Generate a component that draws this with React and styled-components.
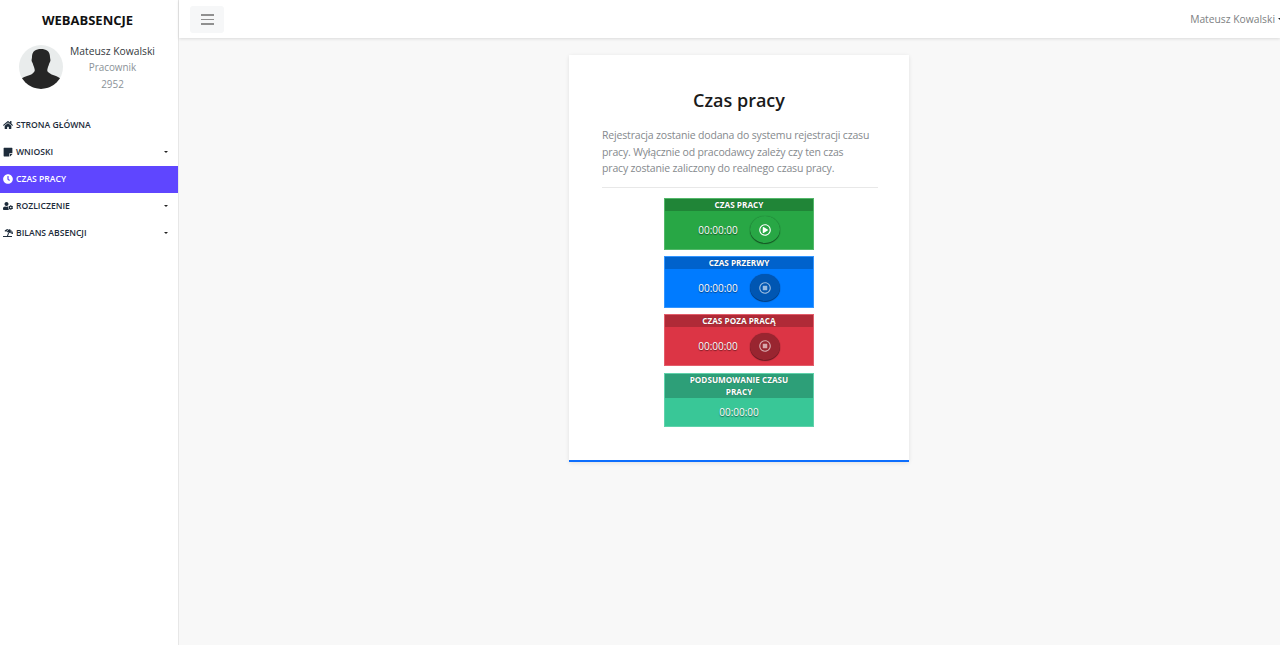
import React from 'react';
import styled, { createGlobalStyle } from 'styled-components';
import { FaHome, FaStickyNote, FaClock, FaUserCog, FaUmbrellaBeach, FaRegPlayCircle, FaRegStopCircle } from 'react-icons/fa';

const Global = createGlobalStyle`
  html, body { margin: 0; padding: 0; height: 100%; }
  body { background: #f8f8f8; font-family: "Open Sans", "Noto Sans", sans-serif; }
  * { box-sizing: border-box; }
`;

const Page = styled.div`
  display: flex;
  height: 645px;
  overflow: hidden;
`;

const Sidebar = styled.aside`
  width: 179px;
  flex: none;
  background: #fff;
  border-right: 1px solid #e7e7e7;
`;

const Brand = styled.div`
  height: 40px;
  display: flex;
  align-items: center;
  justify-content: center;
  padding-right: 3px;
  font-size: 13px;
  font-weight: 700;
  color: #111;
`;

const Profile = styled.div`
  display: flex;
  height: 72px;
  padding: 5px 0 0 19px;
`;

const Avatar = styled.div`
  width: 44px;
  height: 44px;
  flex: none;
  border-radius: 50%;
  background: #e9ecec;
  overflow: hidden;
`;

const ProfileText = styled.div`
  width: 85px;
  flex: none;
  margin: -2.5px 0 0 7px;
  text-align: center;
  white-space: nowrap;
  font-size: 9.9px;
  line-height: 16.5px;
  color: #8b9298;
`;

const ProfileName = styled.div`
  color: #343a40;
  font-size: 10.3px;
`;

const Nav = styled.nav`
  display: flex;
  flex-direction: column;
`;

const NavItem = styled.div`
  height: 27px;
  display: flex;
  align-items: center;
  padding: 0 10px 1px 3px;
  font-size: 8.6px;
  font-weight: 600;
  color: ${p => (p.$active ? '#fff' : '#1d2b3a')};
  background: ${p => (p.$active ? '#5f46ff' : 'transparent')};
`;

const NavIcon = styled.span`
  width: 13px;
  flex: none;
  display: flex;
  svg { height: 10px; width: auto; }
`;

const NavLabel = styled.span`
  flex: 1;
`;

const Caret = styled.span`
  width: 0;
  height: 0;
  border-left: 2px solid transparent;
  border-right: 2px solid transparent;
  border-top: 2px solid #222;
`;

const Main = styled.main`
  flex: 1;
  display: flex;
  flex-direction: column;
  min-width: 0;
`;

const Topbar = styled.header`
  height: 38px;
  flex: none;
  background: #fff;
  display: flex;
  align-items: center;
  justify-content: space-between;
  padding: 0 0 0 11px;
  box-shadow: 0 1px 3px rgba(0, 0, 0, 0.12);
`;

const MenuButton = styled.button`
  width: 34px;
  height: 27px;
  margin-top: 1px;
  border: 0;
  border-radius: 3px;
  background: #f6f7f8;
  display: flex;
  flex-direction: column;
  align-items: center;
  justify-content: center;
  gap: 3px;
  padding: 0;
`;

const MenuLine = styled.span`
  width: 13px;
  height: 1.5px;
  background: #909090;
`;

const UserMenu = styled.div`
  display: flex;
  align-items: center;
  gap: 3px;
  font-size: 10.3px;
  color: #7d7f82;
  margin-right: -2px;
`;

const Content = styled.div`
  flex: 1;
  display: flex;
  justify-content: center;
  align-items: flex-start;
  padding: 17px 0 0 19px;
`;

const Card = styled.section`
  width: 340px;
  height: 407px;
  background: #fff;
  border-bottom: 2px solid #0d6efd;
  box-shadow: 0 1px 4px rgba(0, 0, 0, 0.1);
  padding: 33px 33px 0;
  display: flex;
  flex-direction: column;
  align-items: center;
`;

const Title = styled.h1`
  margin: 0;
  font-size: 18px;
  line-height: 25px;
  font-weight: 600;
  color: #1a1a1a;
`;

const Intro = styled.p`
  margin: 14px 0 0;
  padding-right: 5px;
  font-size: 10.5px;
  letter-spacing: -0.17px;
  line-height: 16.5px;
  color: #85898d;
  align-self: stretch;
`;

const Rule = styled.hr`
  align-self: stretch;
  margin: 10px -2px 10px 0;
  border: 0;
  border-top: 1px solid #e8e8e8;
`;

const Blocks = styled.div`
  width: 150px;
  display: flex;
  flex-direction: column;
  gap: 6.4px;
`;

const Block = styled.div`
  background: ${p => p.$bg};
  color: #fff;
  text-align: center;
  border: 1px solid rgba(255, 255, 255, 0.2);
`;

const BlockHead = styled.div`
  background: rgba(0, 0, 0, 0.2);
  font-size: 8.2px;
  font-weight: 700;
  line-height: 12px;
  padding: 0 18px;
  text-shadow: 0 0 1px rgba(0, 0, 0, 0.4);
`;

const BlockBody = styled.div`
  height: ${p => (p.$short ? '28px' : '38px')};
  display: flex;
  align-items: center;
  justify-content: center;
  gap: 12px;
  font-size: 10px;
  text-shadow: 0 1px 1px rgba(0, 0, 0, 0.55);
`;

const RoundButton = styled.span`
  width: 30px;
  height: 27px;
  border-radius: 50%;
  display: flex;
  align-items: center;
  justify-content: center;
  background: rgba(0, 0, 0, ${p => (p.$on ? '0' : '0.3')});
  box-shadow: 0 1px 1px rgba(0, 0, 0, 0.5), 0 0 1px rgba(0, 0, 0, 0.4);
  color: ${p => (p.$on ? '#fff' : 'rgba(255,255,255,0.6)')};
  svg { width: 12px; height: 12px; }
`;

const nav = [
  { label: 'STRONA GŁÓWNA', Icon: FaHome },
  { label: 'WNIOSKI', Icon: FaStickyNote, caret: true },
  { label: 'CZAS PRACY', Icon: FaClock, active: true },
  { label: 'ROZLICZENIE', Icon: FaUserCog, caret: true },
  { label: 'BILANS ABSENCJI', Icon: FaUmbrellaBeach, caret: true },
];

const timers = [
  { label: 'CZAS PRACY', bg: '#28a745', Icon: FaRegPlayCircle, on: true },
  { label: 'CZAS PRZERWY', bg: '#007bff', Icon: FaRegStopCircle },
  { label: 'CZAS POZA PRACĄ', bg: '#dc3545', Icon: FaRegStopCircle },
];

export default function App() {
  return (
    <Page>
      <Global />
      <Sidebar>
        <Brand>WEBABSENCJE</Brand>
        <Profile>
          <Avatar>
            <svg viewBox="0 0 44 44" width="44" height="44">
              <path fill="#262626" d="M22 4c5 0 9 2 9 8 0 2 1 3 0 5-1 1-1 3-2 5-1 3-1 4 0 5 2 2 5 3 8 4 2 1 4 2 5 3-3 6-11 10-20 10S5 40 2 34c1-1 3-2 6-3 3-1 6-2 7-4 1-1 1-2 0-5-1-2-1-4-2-5-1-2 0-3 0-5 0-6 4-8 9-8z" />
            </svg>
          </Avatar>
          <ProfileText>
            <ProfileName>Mateusz Kowalski</ProfileName>
            <div>Pracownik</div>
            <div>2952</div>
          </ProfileText>
        </Profile>
        <Nav>
          {nav.map(({ label, Icon, caret, active }) => (
            <NavItem key={label} $active={active}>
              <NavIcon><Icon /></NavIcon>
              <NavLabel>{label}</NavLabel>
              {caret && <Caret />}
            </NavItem>
          ))}
        </Nav>
      </Sidebar>
      <Main>
        <Topbar>
          <MenuButton>
            <MenuLine />
            <MenuLine />
            <MenuLine />
          </MenuButton>
          <UserMenu>
            Mateusz Kowalski
            <Caret />
          </UserMenu>
        </Topbar>
        <Content>
          <Card>
            <Title>Czas pracy</Title>
            <Intro>
              Rejestracja zostanie dodana do systemu rejestracji czasu pracy. Wyłącznie od pracodawcy zależy czy ten czas pracy zostanie zaliczony do realnego czasu pracy.
            </Intro>
            <Rule />
            <Blocks>
              {timers.map(({ label, bg, Icon, on }) => (
                <Block key={label} $bg={bg}>
                  <BlockHead>{label}</BlockHead>
                  <BlockBody>
                    00:00:00
                    <RoundButton $on={on}>
                      <Icon />
                    </RoundButton>
                  </BlockBody>
                </Block>
              ))}
              <Block $bg="#39c797">
                <BlockHead>PODSUMOWANIE CZASU PRACY</BlockHead>
                <BlockBody $short>00:00:00</BlockBody>
              </Block>
            </Blocks>
          </Card>
        </Content>
      </Main>
    </Page>
  );
}
